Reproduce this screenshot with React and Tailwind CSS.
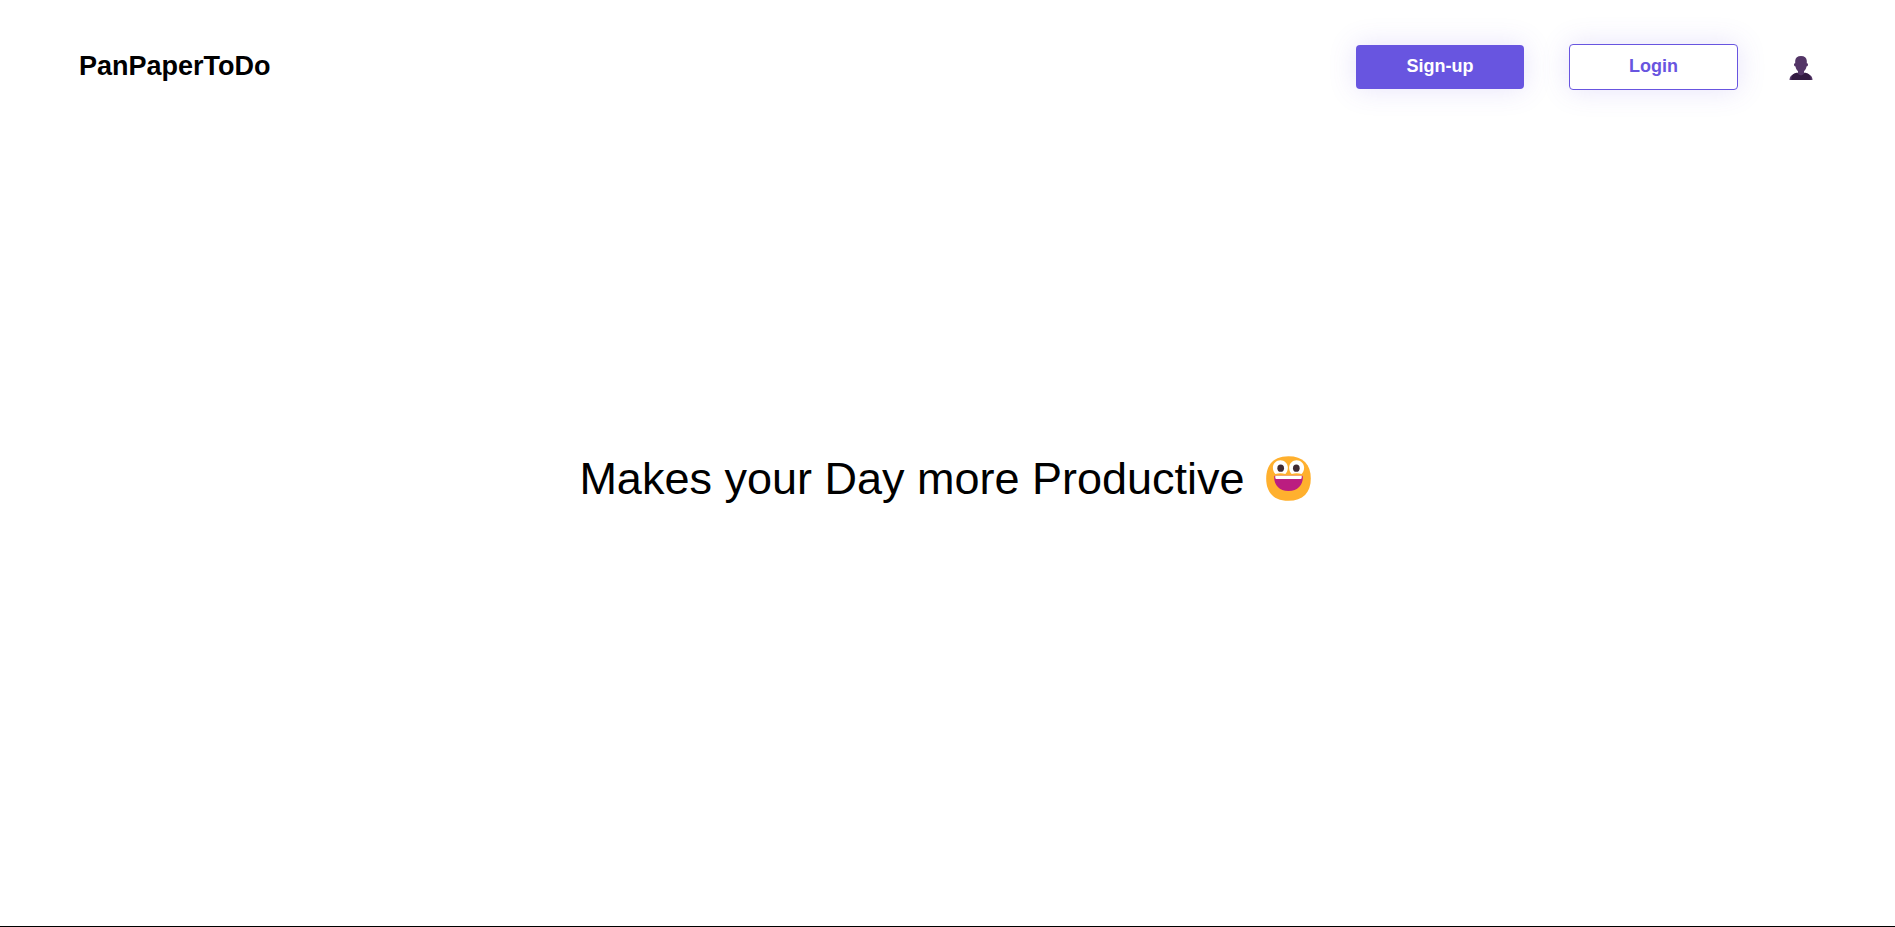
function Person() {
  return (
    <svg viewBox="0 0 24 24" className="h-6 w-6" aria-hidden="true">
      <path fill="#533566" d="M12 0C8.500 0 6.400 1.600 6.200 4.800V7.200C5.400 7.200 4.900 7.900 5 8.800C5.100 9.800 5.700 10.500 6.500 10.600C6.800 12.500 7.800 14.200 9 15.200V17L5 18C2 18.800 .5 21.500 .5 24H23.500C23.500 21.500 22 18.800 19 18L15 17V15.200C16.200 14.200 17.200 12.500 17.500 10.600C18.300 10.500 18.900 9.800 19 8.800C19.100 7.900 18.600 7.200 17.800 7.200V4.800C17.600 1.600 15.500 0 12 0Z" />
      <path fill="#321B41" d="M8.400 16.600C9 18.400 10.300 19.400 12 19.400C13.700 19.400 15 18.400 15.600 16.600L18.800 17.600C20.300 18.200 21.300 20 21.600 22V24H2.400V22C2.700 20 3.700 18.200 5.200 17.600Z" />
    </svg>
  );
}

function Smiley() {
  return (
    <svg viewBox="0 0 32 32" className="h-[51px] w-[51px]" role="img" aria-label="Grinning face">
      <path fill="#FFB02E" d="M16 30C25 30 30 25 30 16C30 7 25 2 16 2C7 2 2 7 2 16C2 25 7 30 16 30Z" />
      <path fill="#fff" d="M10.900 4.500C13.500 4.500 15.600 6.600 15.600 9.200C15.600 10.700 15 12.200 14 13.200C12 12.600 9.800 12.600 7.800 13.200C6.800 12.200 6.200 10.700 6.200 9.200C6.200 6.600 8.300 4.500 10.900 4.500Z" />
      <path fill="#fff" d="M21.100 4.500C23.700 4.500 25.800 6.600 25.800 9.200C25.800 10.700 25.200 12.200 24.200 13.200C22.200 12.600 20 12.600 18 13.200C17 12.200 16.400 10.700 16.400 9.200C16.400 6.600 18.500 4.500 21.100 4.500Z" />
      <ellipse cx="11.100" cy="9.500" rx="2.100" ry="2.300" fill="#402A32" />
      <ellipse cx="20.900" cy="9.500" rx="2.100" ry="2.300" fill="#402A32" />
      <path fill="#BB1D80" d="M7 15C7 20.200 10.200 23.800 16 23.800C21.800 23.800 25 20.200 25 15C25 14.600 24.700 14.300 24.300 14.300H7.700C7.300 14.300 7 14.600 7 15Z" />
      <path fill="#fff" d="M7.700 14.300H24.300V15.300C24.300 15.900 23.900 16.300 23.300 16.300H8.700C8.100 16.300 7.700 15.900 7.700 15.300Z" />
    </svg>
  );
}

export default function App() {
  return (
    <div className="flex min-h-screen flex-col border-b border-black bg-white font-['Liberation_Sans',Arial,sans-serif] text-black">
      <header className="flex items-center justify-between px-[79px] pt-11">
        <a href="#" className="pb-0.5 text-[27px] leading-10 font-bold">PanPaperToDo</a>
        <nav className="flex items-center gap-[45px]">
          <button type="button" className="h-11 w-42 rounded bg-[#6855E0] pb-0.5 text-lg font-bold text-white shadow-[0_0_28px_rgba(104,85,224,0.17)]">
            Sign-up
          </button>
          <button type="button" className="h-[46px] w-[169px] rounded border border-[#6855E0] bg-white pb-0.5 text-lg font-bold text-[#6855E0] shadow-[0_0_28px_rgba(104,85,224,0.17)]">
            Login
          </button>
          <button type="button" aria-label="Account" className="pt-0.5 pr-[3px] pl-1.5">
            <Person />
          </button>
        </nav>
      </header>
      <main className="flex grow items-center justify-center pr-0.5 pb-15">
        <h1 className="flex items-center gap-[18px] text-[45px] leading-13">
          <span className="pt-0.5">Makes your Day more Productive</span>
          <Smiley />
        </h1>
      </main>
    </div>
  );
}
